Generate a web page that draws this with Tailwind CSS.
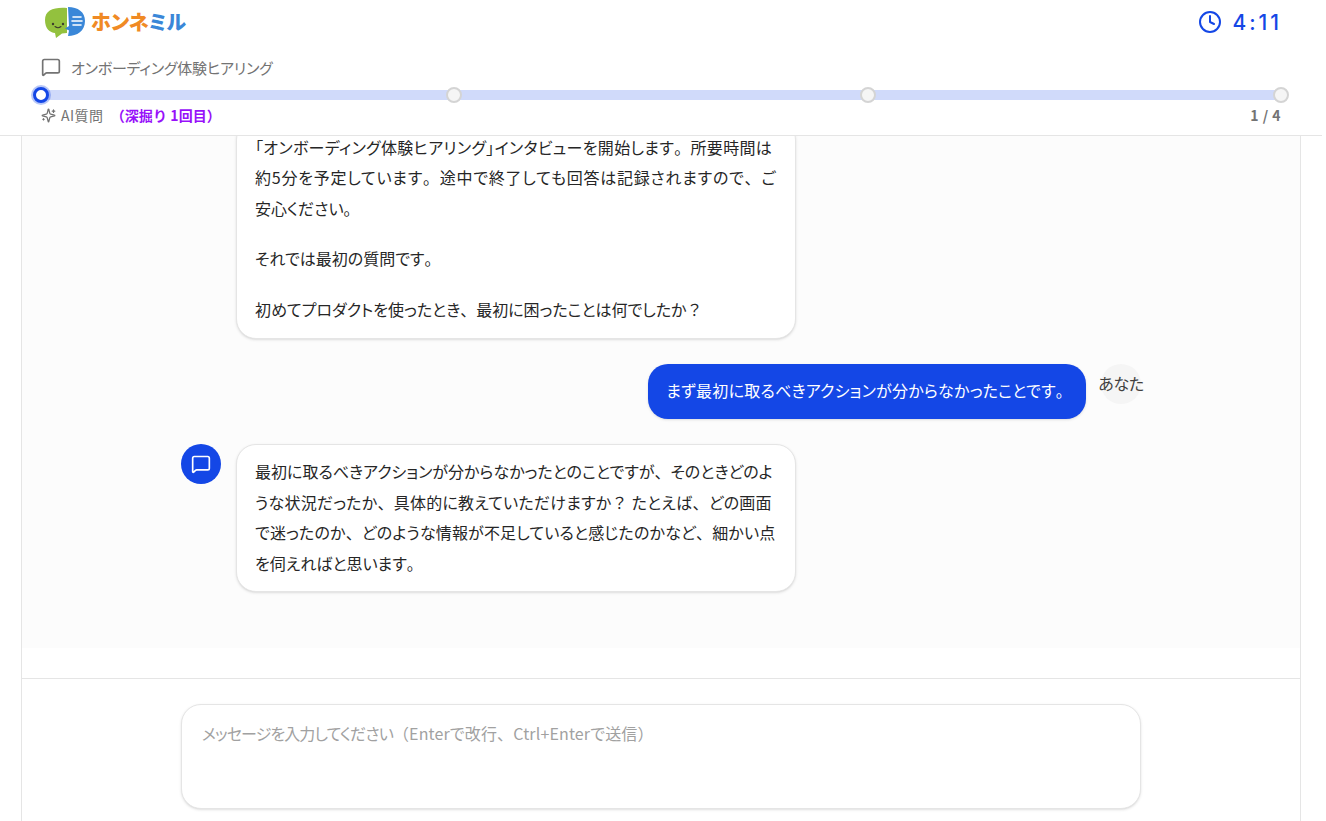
<!DOCTYPE html>
<html lang="ja"><head><meta charset="utf-8"><script src="https://cdn.jsdelivr.net/npm/@tailwindcss/browser@4"></script></head>
<body class="bg-white overflow-hidden">
<div class="w-[1322px] h-[821px] flex flex-col font-['Noto_Sans_CJK_JP','Noto_Sans',sans-serif] [font-feature-settings:'palt'] text-[#262626]">
  <header class="h-[136px] shrink-0 border-b border-neutral-200 bg-white px-[40px] relative">
    <div class="flex items-center justify-between h-[44px] pl-[5px] pr-[1px]">
      <div class="flex items-center gap-[5px]">
        <svg class="w-[41px] h-[32px]" viewBox="0 0 41 32"><path d="M22 2 C9 1 0 4 0 14 C0 23 5 26.5 10 27 L11 32 L17 27.5 L22 27 Z" fill="#93c13e"/><path d="M23 1 C33 1 40 6 40 15 C40 25 32 30 23 30 L24 24.5 L20 22.5 L24 20 Z" fill="#3a87d8"/><circle cx="8" cy="18" r="1.2" fill="#3d3d2e"/><circle cx="18" cy="18" r="1.2" fill="#3d3d2e"/><path d="M10 20.5 Q13 23 16 20.5" stroke="#3d3d2e" stroke-width="1.1" fill="none" stroke-linecap="round"/><path d="M28 11h8M27 15h10M28 19h8" stroke="#fff" stroke-width="1.6" stroke-linecap="round"/></svg>
        <div class="text-[20px] font-black leading-none"><span class="text-[#f08a24]">ホンネ</span><span class="text-[#3a87d8]">ミル</span></div>
      </div>
      <div class="flex items-center gap-[10px] text-blue-700">
        <svg class="w-[24px] h-[24px]" viewBox="0 0 24 24" fill="none" stroke="currentColor" stroke-width="2" stroke-linecap="round" stroke-linejoin="round"><circle cx="12" cy="12" r="10"/><path d="M12 6v6l4 2"/></svg>
        <span class="text-[21px] tracking-[3px] mr-[-1px] font-medium font-['Inter',sans-serif] leading-none">4:11</span>
      </div>
    </div>
    <div class="flex items-center gap-[10px] mt-[11px] h-[24px] pl-[1px] text-neutral-500">
      <svg class="w-[20px] h-[20px]" viewBox="0 0 24 24" fill="none" stroke="currentColor" stroke-width="2" stroke-linecap="round" stroke-linejoin="round"><path d="M22 17a2 2 0 0 1-2 2H6.828a2 2 0 0 0-1.414.586l-2.202 2.202A.71.71 0 0 1 2 21.286V5a2 2 0 0 1 2-2h16a2 2 0 0 1 2 2z"/></svg>
      <span class="text-[15px] leading-none tracking-[-0.2px]">オンボーディング体験ヒアリング</span>
    </div>
    <div class="relative h-[10px] mt-[11px] mr-[1px] bg-blue-700/20 rounded-full">
      <span class="absolute left-[-7px] top-[-3px] w-[16px] h-[16px] rounded-full bg-white border-[3px] border-blue-700 ring-2 ring-blue-700/30"></span>
      <span class="absolute left-[406px] top-[-3px] w-[16px] h-[16px] rounded-full bg-neutral-100 border-2 border-neutral-300"></span>
      <span class="absolute left-[820px] top-[-3px] w-[16px] h-[16px] rounded-full bg-neutral-100 border-2 border-neutral-300"></span>
      <span class="absolute left-[1233px] top-[-3px] w-[16px] h-[16px] rounded-full bg-neutral-100 border-2 border-neutral-300"></span>
    </div>
    <div class="flex items-center justify-between mt-[5px] pr-[1px] text-[14px] leading-[20px] text-neutral-500 tracking-[0.5px]">
      <div class="flex items-center gap-[5px] pl-[1px]">
        <svg class="w-[15px] h-[15px]" viewBox="0 0 24 24" fill="none" stroke="currentColor" stroke-width="2" stroke-linecap="round" stroke-linejoin="round"><path d="M9.9 15.5A2 2 0 0 0 8.5 14.1l-6.1-1.6a.5.5 0 0 1 0-1l6.1-1.6A2 2 0 0 0 9.9 8.5l1.6-6.1a.5.5 0 0 1 1 0l1.6 6.1a2 2 0 0 0 1.4 1.4l6.1 1.6a.5.5 0 0 1 0 1l-6.1 1.6a2 2 0 0 0-1.4 1.4l-1.6 6.1a.5.5 0 0 1-1 0z"/><path d="M20 3v4M22 5h-4M4 17v2M5 18H3"/></svg>
        <span>AI質問</span>
        <span class="ml-[2px] text-purple-600 font-semibold tracking-[0.1px] [font-feature-settings:normal]">（深掘り 1回目）</span>
      </div>
      <span class="font-semibold">1 / 4</span>
    </div>
  </header>
  <main class="w-[1280px] mx-auto flex-1 min-h-0 flex flex-col border-x border-neutral-200 bg-white">
    <div class="h-[512px] shrink-0 bg-[#fcfcfc] overflow-hidden flex flex-col justify-end pb-[56px]">
      <div class="w-[960px] mx-auto flex flex-col gap-[25px] text-[16px] leading-[30.6px]">
        <div class="pl-[55px]">
          <div class="w-[560px] rounded-[20px] border border-neutral-200 bg-white shadow-sm px-[18px] pt-[10.5px] pb-[13.5px] flex flex-col gap-[20px] whitespace-nowrap">
            <div>
              <span class="block tracking-[0.32px]">「オンボーディング体験ヒアリング」インタビューを開始します<span class="[font-feature-settings:normal]">。</span>所要時間は</span>
              <span class="block tracking-[0.75px]">約5分を予定しています<span class="[font-feature-settings:normal]">。</span>途中で終了しても回答は記録されますので<span class="[font-feature-settings:normal]">、</span>ご</span>
              <span class="block">安心ください<span class="[font-feature-settings:normal]">。</span></span>
            </div>
            <p>それでは最初の質問です<span class="[font-feature-settings:normal]">。</span></p>
            <p>初めてプロダクトを使ったとき<span class="[font-feature-settings:normal]">、</span>最初に困ったことは何でしたか<span class="[font-feature-settings:normal]">？</span></p>
          </div>
        </div>
        <div class="flex justify-end items-start gap-[15px]">
          <div class="rounded-[20px] bg-blue-700 text-white pl-[18px] pr-[14px] pt-[11px] pb-[13px] shadow-sm tracking-[0.22px]">まず最初に取るべきアクションが分からなかったことです<span class="[font-feature-settings:normal]">。</span></div>
          <div class="w-[40px] h-[40px] rounded-full bg-neutral-100 flex items-start justify-center whitespace-nowrap text-neutral-700 text-[16px] leading-[39px] tracking-[-0.3px]">あなた</div>
        </div>
        <div class="flex items-start gap-[15px]">
          <div class="w-[40px] h-[40px] rounded-full bg-blue-700 flex items-center justify-center text-white shrink-0">
            <svg class="w-[20px] h-[20px]" viewBox="0 0 24 24" fill="none" stroke="currentColor" stroke-width="2" stroke-linecap="round" stroke-linejoin="round"><path d="M22 17a2 2 0 0 1-2 2H6.828a2 2 0 0 0-1.414.586l-2.202 2.202A.71.71 0 0 1 2 21.286V5a2 2 0 0 1 2-2h16a2 2 0 0 1 2 2z"/></svg>
          </div>
          <div class="w-[560px] rounded-[20px] border border-neutral-200 bg-white shadow-sm px-[18px] pt-[11.5px] pb-[12.5px] whitespace-nowrap">
            <span class="block">最初に取るべきアクションが分からなかったとのことですが<span class="[font-feature-settings:normal]">、</span>そのときどのよ</span>
            <span class="block tracking-[0.22px]">うな状況だったか<span class="[font-feature-settings:normal]">、</span>具体的に教えていただけますか<span class="[font-feature-settings:normal]">？</span> たとえば<span class="[font-feature-settings:normal]">、</span>どの画面</span>
            <span class="block tracking-[0.15px]">で迷ったのか<span class="[font-feature-settings:normal]">、</span>どのような情報が不足していると感じたのかなど<span class="[font-feature-settings:normal]">、</span>細かい点</span>
            <span class="block">を伺えればと思います<span class="[font-feature-settings:normal]">。</span></span>
          </div>
        </div>
      </div>
    </div>
    <div class="h-[30px] shrink-0"></div>
    <div class="flex-1 border-t border-neutral-200 pt-[25px]">
      <div class="w-[960px] h-[105px] mx-auto rounded-[20px] border border-neutral-200 bg-white shadow-sm px-[20px] pt-[13px] text-[16px] leading-[30px] text-[#a1a1a1] tracking-[0.15px]"><span class="tracking-[-0.9px]">メッセージを入力してください</span><span class="[font-feature-settings:normal]">（</span>Enterで改行<span class="[font-feature-settings:normal]">、</span>Ctrl+Enterで送信<span class="[font-feature-settings:normal]">）</span></div>
    </div>
  </main>
</div>
</body></html>
